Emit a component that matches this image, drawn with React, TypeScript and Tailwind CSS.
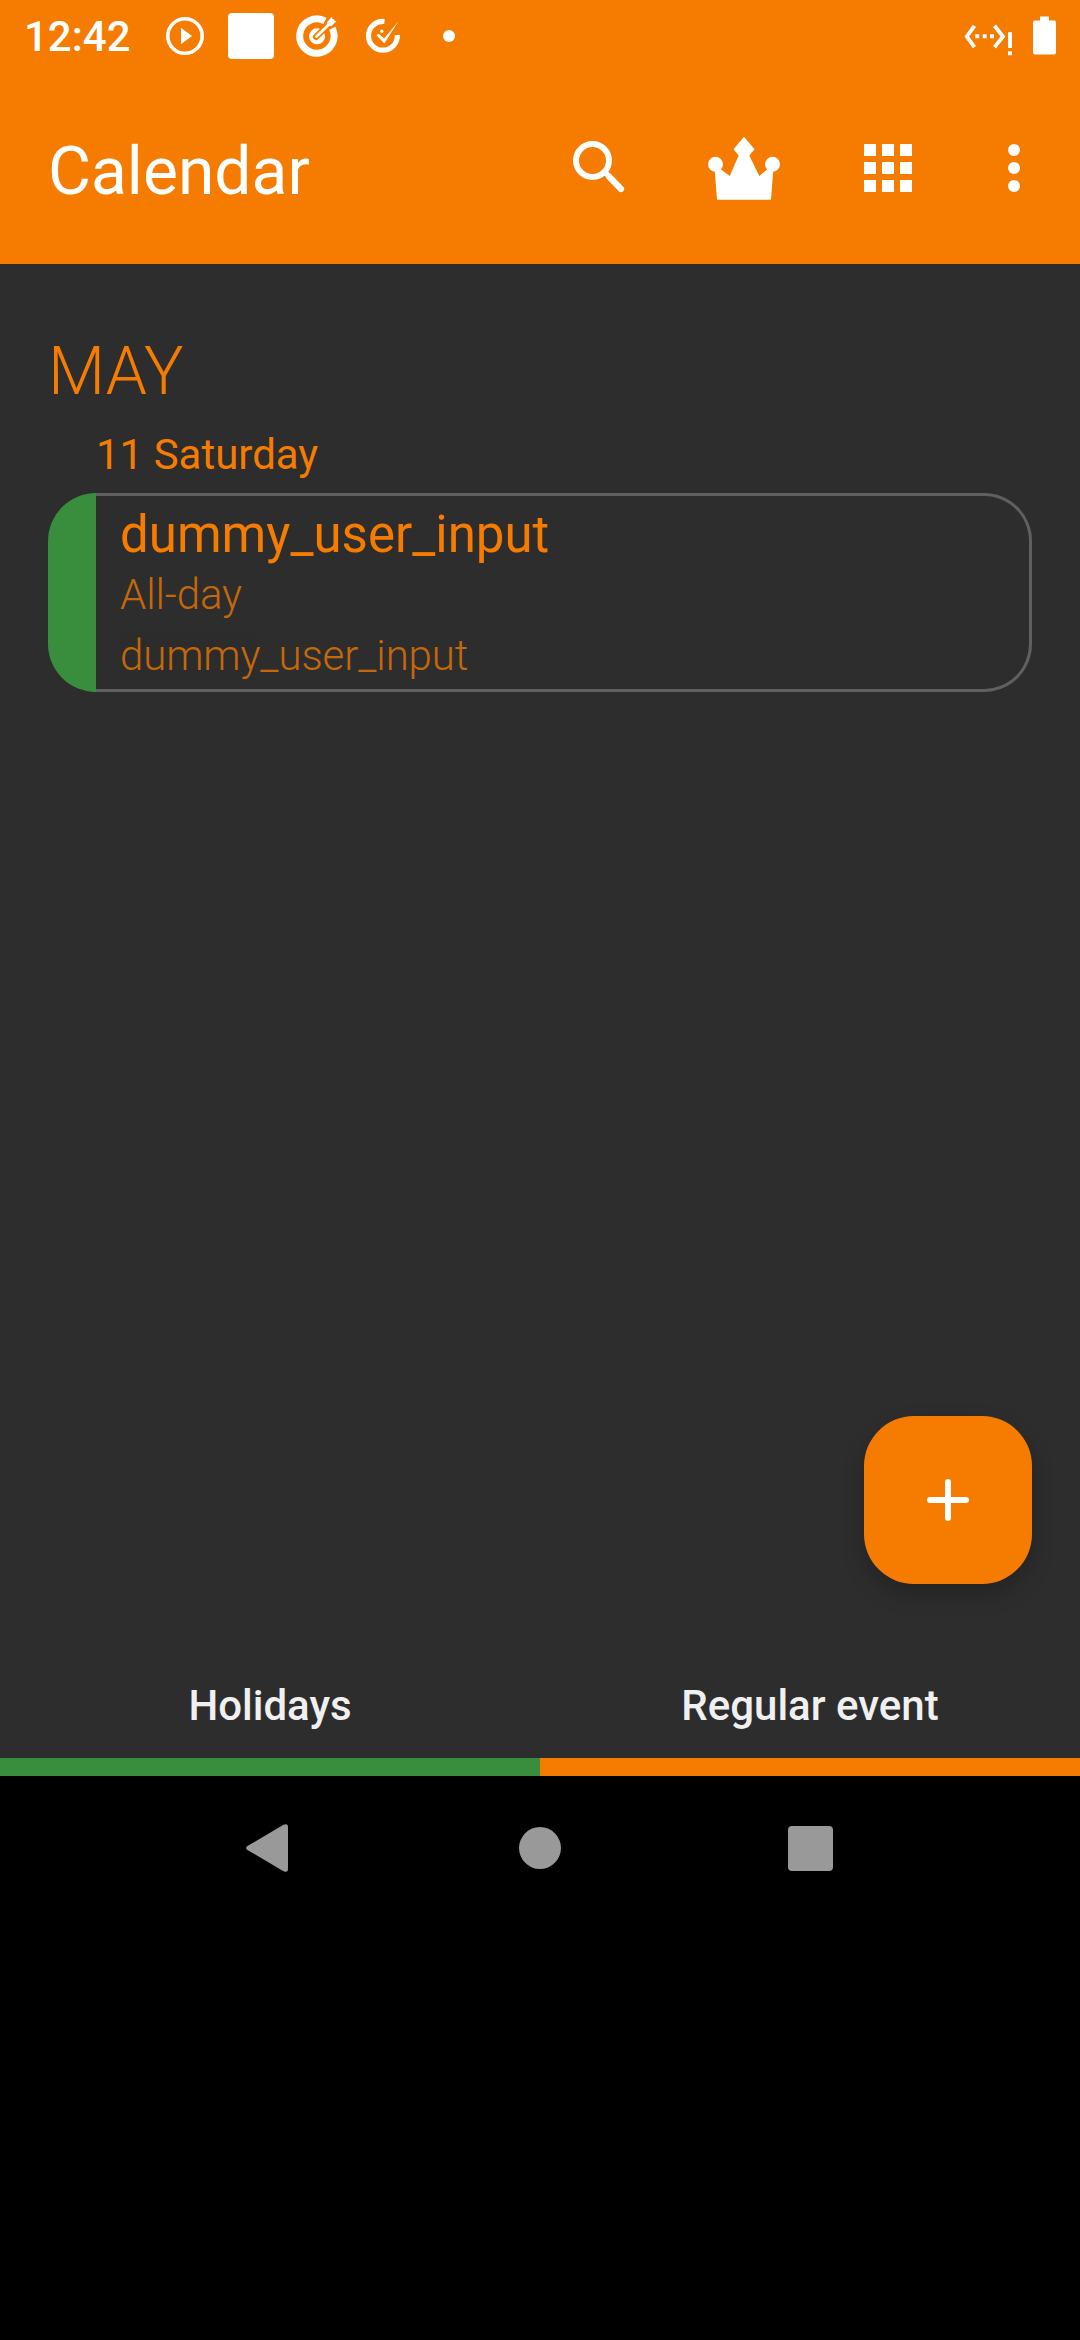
const W = '#ffffff';

function StatusBar() {
  return (
    <div className="flex h-[72px] items-center justify-between">
      <div className="flex items-center">
        <span className="ml-[24px] w-[142px] pt-[2px] text-[42px] font-medium leading-[72px]">12:42</span>
        <svg className="block" width="38" height="38" viewBox="0 0 38 38">
          <circle cx="19" cy="19" r="17.2" fill="none" stroke={W} strokeWidth="3.6" />
          <path d="M15 10.8v16.4L26 19z" fill={W} />
        </svg>
        <div className="ml-[24px] size-[46px] rounded-[4px] bg-white" />
        <svg className="ml-[21px] block" width="44" height="44" viewBox="0 0 44 44">
          <path d="M30 6.8A17.2 17.2 0 1 0 37.3 14.3" fill="none" stroke={W} strokeWidth="7" />
          <circle cx="22" cy="22.300" r="8" fill={W} />
          <path d="M21 23L36 8.200" stroke="#f67c01" strokeWidth="6" strokeLinecap="round" />
          <path d="M21.500 22.500L38 6.500" stroke={W} strokeWidth="2.800" strokeLinecap="round" />
          <path d="M32 8.300L37 2.800l.8 3.600 3.700.8-5.200 5-4-.6z" fill={W} />
        </svg>
        <svg className="ml-[25.5px] block" width="36" height="40" viewBox="0 0 36 40">
          <path d="M19.500 5.500A14.400 14.400 0 1 0 32.300 19" fill="none" stroke={W} strokeWidth="5.200" />
          <path d="M11.500 19.300l2-1.800 5.600 5L33.500 5.200 19.300 27.500z" fill={W} />
          <circle cx="16.800" cy="15.300" r="1.700" fill={W} />
        </svg>
        <div className="ml-[42.5px] size-[12px] rounded-full bg-white" />
      </div>
      <div className="mr-[24px] flex items-center gap-[20px]">
        <svg className="block" width="50" height="40" viewBox="0 0 50 40">
          <path d="M11.500 9.800L3.800 20.500l7.700 10.700M31.500 9.800L40 20.500 31.500 31.200" fill="none" stroke={W} strokeWidth="3.800" />
          <path d="M12.300 18.300h4v4h-4zM19.700 18.300h4v4h-4zM27 18.300h4v4h-4zM45 16.300h4v15.700h-4zM45 35.200h4v4h-4z" fill={W} />
        </svg>
        <svg className="block" width="23" height="40" viewBox="0 0 23 40">
          <path d="M7 0.500h9v4h5a2 2 0 0 1 2 2v30a2 2 0 0 1-2 2H2a2 2 0 0 1-2-2v-30a2 2 0 0 1 2-2h5z" fill={W} />
        </svg>
      </div>
    </div>
  );
}

function AppBar() {
  return (
    <div className="flex h-[192px] items-start pt-[48px]">
      <h1 className="ml-[48px] mt-px w-[524px] text-[66px] font-normal leading-[102px]">Calendar</h1>
      <svg className="mt-[19px] block" width="54" height="54" viewBox="0 0 54 54">
        <circle cx="20.500" cy="21.500" r="16.500" fill="none" stroke={W} strokeWidth="6" />
        <path d="M33 33L37 37.500" stroke={W} strokeWidth="5" />
        <path d="M37 37.500L49 50" stroke={W} strokeWidth="6.200" strokeLinecap="round" />
      </svg>
      <svg className="ml-[82px] mt-[16px] block" width="72" height="66" viewBox="0 0 72 66">
        <path d="M36 .7L46.600 13.300 41.300 19.500 51.300 40 59.500 33 65.200 35 63 63.700H9L6.800 35 12.500 33 21.700 40 30.700 19.500 25.500 13.300z" fill={W} />
        <circle cx="7.500" cy="28.300" r="7.500" fill={W} />
        <circle cx="64.500" cy="28.300" r="7.500" fill={W} />
      </svg>
      <div className="ml-[84px] mt-[24px] grid grid-cols-[12px_12px_12px] gap-[6px]">
        {Array.from({ length: 9 }, (_, i) => (
          <span key={i} className="size-[12px] bg-white" />
        ))}
      </div>
      <div className="ml-[96px] mt-[24px] flex flex-col gap-[6px]">
        {[0, 1, 2].map((i) => (
          <span key={i} className="size-[12px] rounded-full bg-white" />
        ))}
      </div>
    </div>
  );
}

function EventCard() {
  return (
    <div className="mx-[48px] flex h-[199px] overflow-hidden rounded-[48px] bg-[#388e3c]">
      <div className="w-[48px]" />
      <div className="flex-1 rounded-r-[48px] bg-[#2d2d2d]">
        <div className="h-[199px] rounded-r-[48px] border-y-[3px] border-r-[3px] border-[#606060] pl-[24px] text-[#f57c00]">
          <p className="pt-[9px] text-[51px] leading-[60px]">dummy_user_input</p>
          <p className="text-[42px] font-light leading-[60px] tracking-[-0.1px] opacity-75">All-day</p>
          <p className="text-[42px] font-light leading-[62px] tracking-[-0.1px] opacity-75">dummy_user_input</p>
        </div>
      </div>
    </div>
  );
}

export default function App() {
  return (
    <div className="flex h-[2340px] w-[1080px] flex-col overflow-hidden bg-black font-['Roboto',sans-serif]">
      <header className="h-[264px] bg-[#f67c01] text-white">
        <StatusBar />
        <AppBar />
      </header>
      <main className="flex h-[1512px] flex-col bg-[#2d2d2d]">
        <h2 className="ml-[48px] mt-[68px] text-[66px] font-light leading-[80px] text-[#f57c00]">MAY</h2>
        <p className="ml-[96px] mt-[18px] h-[63px] text-[42px] leading-[50px] text-[#f57c00]">11 Saturday</p>
        <EventCard />
        <button className="ml-[864px] mt-[724px] flex size-[168px] items-center justify-center rounded-[50px] bg-[#f67c01] shadow-[0_10px_22px_rgba(0,0,0,0.22)]">
          <svg className="block" width="42" height="42" viewBox="0 0 42 42">
            <path d="M21 3v36M3 21h36" stroke={W} strokeWidth="6" strokeLinecap="round" />
          </svg>
        </button>
        <div className="mt-auto grid grid-cols-2 text-center text-[42px] font-medium leading-[50px] text-[#f0f0f0]">
          <div className="border-b-[18px] border-[#388e3c] pb-[27px]">Holidays</div>
          <div className="border-b-[18px] border-[#f67c01] pb-[27px]">Regular event</div>
        </div>
      </main>
      <nav className="flex h-[144px] items-center">
        <svg className="ml-[246px] block" width="42" height="48" viewBox="0 0 42 48">
          <path d="M37.500 .8Q42-1 42 3V45Q42 49 37.500 47.200L1.500 26Q-1.500 24 1.500 22z" fill="#999999" />
        </svg>
        <div className="ml-[231px] size-[42px] rounded-full bg-[#999999]" />
        <div className="ml-[227px] size-[45px] rounded-[4px] bg-[#999999]" />
      </nav>
    </div>
  );
}
